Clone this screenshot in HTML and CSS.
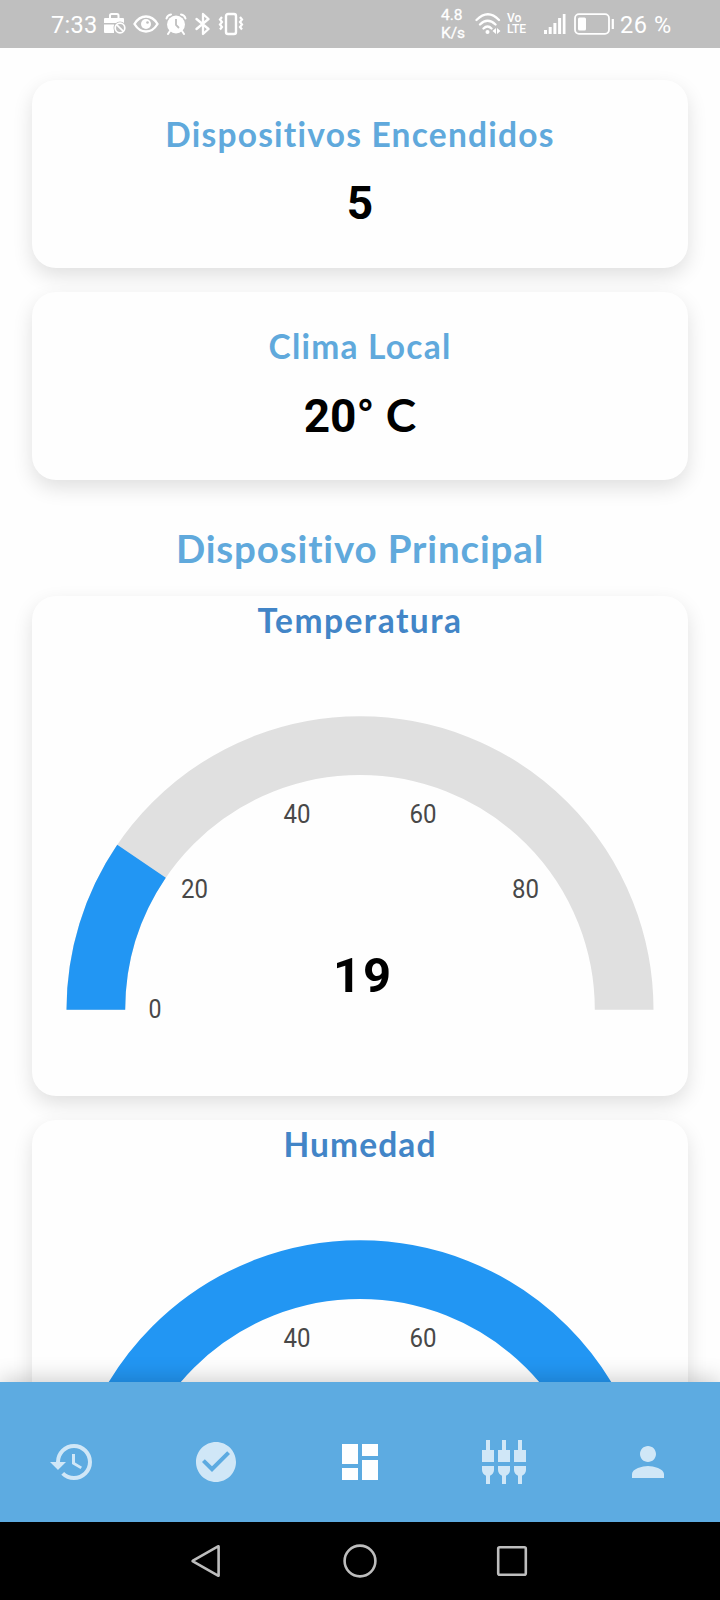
FILE: index.html
```html
<!DOCTYPE html>
<html lang="es">
<head>
<meta charset="utf-8">
<title>Dispositivos</title>
<link rel="stylesheet" href="styles.css">
</head>
<body>
<div class="screen">
  <header class="status">
    <div class="status-left">
      <span class="clock">7:33</span>
      <svg class="ic-bag" width="24" height="24" viewBox="0 0 24 24"><path d="M7 7V3.500Q7 2 8.500 2h5.500q1.500 0 1.500 1.500V7" fill="none" stroke="#fff" stroke-width="2"/><path d="M2 6h18q1 0 1 1v4H1V7q0-1 1-1zM1 12.500h10V21H2q-1 0-1-1z" fill="#fff"/><circle cx="17" cy="16" r="6.500" fill="#bfbfbf"/><circle cx="17" cy="16" r="4.800" fill="none" stroke="#fff" stroke-width="1.700"/><path d="M13.800 12.800l6.400 6.400" stroke="#fff" stroke-width="1.700"/></svg>
      <svg class="ic-eye" width="26" height="18" viewBox="0 0 26 18"><path d="M1.500 9Q6 1.500 13 1.500T24.500 9Q20 16.500 13 16.500T1.500 9z" fill="none" stroke="#fff" stroke-width="2.400"/><circle cx="13" cy="9" r="5" fill="#fff"/><circle cx="14.500" cy="7.500" r="1.300" fill="#bfbfbf"/></svg>
      <svg class="ic-alarm" width="22" height="22" viewBox="0 0 22 22"><circle cx="11" cy="11.500" r="9" fill="#fff"/><path d="M1.500 5.500Q2.500 2 6 1.500M20.500 5.500Q19.500 2 16 1.500M5 18l-2 3M17 18l2 3" fill="none" stroke="#fff" stroke-width="2" stroke-linecap="round"/><path d="M11 6v6l3 3" fill="none" stroke="#bfbfbf" stroke-width="1.800"/></svg>
      <svg class="ic-bt" width="16" height="24" viewBox="0 0 16 24"><path d="M1.500 7l12 10-5.500 5V2l5.500 5-12 10" fill="none" stroke="#fff" stroke-width="2.300" stroke-linejoin="round" stroke-linecap="round"/></svg>
      <svg class="ic-vib" width="26" height="24" viewBox="0 0 26 24"><rect x="8" y="2" width="10" height="20" rx="2" fill="none" stroke="#fff" stroke-width="2.400"/><path d="M4 5l-2 2.500L4 10l-2 2.500L4 15l-2 2.500M22 5l2 2.500L22 10l2 2.500L22 15l2 2.500" fill="none" stroke="#fff" stroke-width="2.200"/></svg>
    </div>
    <div class="status-right">
      <div class="speed"><span>4.8</span><span>K/s</span></div>
      <svg class="ic-wifi" width="26" height="22" viewBox="0 0 26 22"><path d="M1.500 7Q13-4.500 24 7M5 11.500Q12.500 4 20.500 11.500M8.500 15.500q4-4 8 0" fill="none" stroke="#fff" stroke-width="2.300" stroke-linecap="round"/><circle cx="12.500" cy="19" r="2" fill="#fff"/><path d="M21 15v6l-3.500-3zM22 15v6l3.500-3z" fill="#fff"/></svg>
      <div class="volte"><span>Vo</span><span>LTE</span></div>
      <svg class="ic-signal" width="22" height="22" viewBox="0 0 22 22"><path d="M0 17h3v4H0zM4.700 14h3v7h-3zM9.400 10h3v11h-3zM14.100 5h3v16h-3zM18.800 1h2.700v20h-2.700z" fill="#fff"/></svg>
      <svg class="ic-batt" width="41" height="22" viewBox="0 0 41 22"><rect x="1" y="1.200" width="34" height="19.600" rx="4" fill="none" stroke="#fff" stroke-width="1.800"/><rect x="4" y="4.500" width="8" height="13" rx="1.500" fill="#fff"/><path d="M38.800 6v10" stroke="#fff" stroke-width="2.200"/></svg>
      <span class="percent">26 %</span>
    </div>
  </header>

  <main class="content">
    <section class="card stat">
      <h2 class="stat-title">Dispositivos Encendidos</h2>
      <p class="stat-value">5</p>
    </section>
    <section class="card stat">
      <h2 class="stat-title">Clima Local</h2>
      <p class="stat-value">20° <span class="unit">C</span></p>
    </section>
    <h1 class="section-title">Dispositivo Principal</h1>
    <section class="card gauge-card">
      <h2 class="gauge-title">Temperatura</h2>
      <svg class="gauge" width="656" height="400" viewBox="0 0 656 400">
        <path class="track" d="M63.850 313.800A264.150 264.150 0 0 1 592.150 313.800"/>
        <path class="fill" pathLength="100" stroke-dasharray="19 100" d="M63.850 313.800A264.150 264.150 0 0 1 592.150 313.800"/>
        <g class="ticks"><text x="123" y="322" textLength="13" lengthAdjust="spacingAndGlyphs">0</text><text x="162.500" y="202" textLength="27" lengthAdjust="spacingAndGlyphs">20</text><text x="265" y="127" textLength="27" lengthAdjust="spacingAndGlyphs">40</text><text x="391" y="127" textLength="27" lengthAdjust="spacingAndGlyphs">60</text><text x="493.500" y="202" textLength="27" lengthAdjust="spacingAndGlyphs">80</text></g>
        <text class="reading" x="331" y="296">19</text>
      </svg>
    </section>
    <section class="card gauge-card">
      <h2 class="gauge-title humidity">Humedad</h2>
      <svg class="gauge" width="656" height="400" viewBox="0 0 656 400">
        <path class="fill" d="M63.850 313.800A264.150 264.150 0 0 1 592.150 313.800"/>
        <g class="ticks"><text x="265" y="127" textLength="27" lengthAdjust="spacingAndGlyphs">40</text><text x="391" y="127" textLength="27" lengthAdjust="spacingAndGlyphs">60</text></g>
      </svg>
    </section>
  </main>

  <nav class="tabs">
    <svg class="tab" viewBox="0 0 24 24"><path d="M13 3a9 9 0 0 0-9 9H1l3.890 3.890.07.14L9 12H6c0-3.870 3.130-7 7-7s7 3.130 7 7-3.130 7-7 7c-1.930 0-3.680-.79-4.940-2.060l-1.420 1.420A8.950 8.950 0 0 0 13 21a9 9 0 0 0 0-18zm-1 5v5l4.280 2.540.72-1.210-3.500-2.080V8H12z"/></svg>
    <svg class="tab" viewBox="0 0 24 24"><path d="M12 2C6.480 2 2 6.480 2 12s4.480 10 10 10 10-4.480 10-10S17.520 2 12 2zm-2 15l-5-5 1.410-1.410L10 14.170l7.590-7.590L19 8l-9 9z"/></svg>
    <svg class="tab active" viewBox="0 0 24 24"><path d="M3 13h8V3H3v10zm0 8h8v-6H3v6zm10 0h8V11h-8v10zm0-18v6h8V3h-8z"/></svg>
    <svg class="tab" viewBox="0 0 24 24"><path d="M3 1h2v5h2v6H1V6h2zM11 1h2v5h2v6H9V6h2zM19 1h2v5h2v6h-6V6h2zM1 14h6v2c0 1.300-.84 2.400-2 2.820V23H3v-4.180C1.840 18.400 1 17.300 1 16zM9 14h6v2c0 1.300-.84 2.400-2 2.820V23h-2v-4.180C9.840 18.400 9 17.300 9 16zM17 14h6v2c0 1.300-.84 2.400-2 2.820V23h-2v-4.180c-1.160-.42-2-1.520-2-2.820z"/></svg>
    <svg class="tab" viewBox="0 0 24 24"><path d="M12 12c2.210 0 4-1.790 4-4s-1.790-4-4-4-4 1.790-4 4 1.790 4 4 4zm0 2c-2.670 0-8 1.340-8 4v2h16v-2c0-2.660-5.330-4-8-4z"/></svg>
  </nav>
  <footer class="system">
    <svg width="36" height="36" viewBox="0 0 36 36"><path d="M28.600 3.500v29q0 .5-.6.200L3 18.500q-.8-.5 0-1L28 3.300q.6-.3.600.2z"/></svg>
    <svg width="36" height="36" viewBox="0 0 36 36"><circle cx="18" cy="18" r="15.400"/></svg>
    <svg width="36" height="36" viewBox="0 0 36 36"><rect x="4.200" y="4.200" width="27.600" height="27.600" rx="1.500"/></svg>
  </footer>
</div>
</body>
</html>
```
FILE: styles.css
```css
* { box-sizing: border-box; }
body { margin: 0; background: #fefefe; font-family: Lato, sans-serif; }
h1, h2, p { margin: 0; font-weight: 700; text-align: center; white-space: nowrap; }
.screen { width: 720px; height: 1600px; display: flex; flex-direction: column; overflow: hidden; }

.status { flex: none; height: 48px; background: #bfbfbf; color: #fff; display: flex; justify-content: space-between; padding: 0 46px 0 51px; font-family: Roboto, sans-serif; }
.status-left, .status-right { display: flex; align-items: center; }
.status svg { flex: none; }
.clock, .percent { font-size: 23.500px; line-height: 48px; white-space: nowrap; padding-top: 1px; }
.clock { width: 52px; letter-spacing: .3px; }
.ic-eye { margin-left: 6px; }
.ic-alarm { margin-left: 6px; }
.ic-bt { margin-left: 8px; }
.ic-vib { margin-left: 7px; }
.speed, .volte { display: flex; flex-direction: column; }
.speed { width: 34px; font-size: 15.500px; line-height: 18px; -webkit-text-stroke: .3px #fff; }
.ic-wifi { margin-right: 6px; }
.volte { width: 37px; font-size: 12px; line-height: 11px; font-weight: 500; }
.ic-batt { margin-left: 8px; }
.percent { margin-left: 5px; width: 54px; letter-spacing: .6px; }

.content { flex: 1; min-height: 0; overflow: hidden; padding: 32px 32px 0; background: #fefefe; }
.card { background: #fefefe; border-radius: 24px; box-shadow: 0 8px 20px rgba(0, 0, 0, .12); }
.stat { height: 188px; margin-bottom: 24px; padding-top: 33px; }
.stat-title { font-size: 33.500px; line-height: 42px; color: #60a9dc; letter-spacing: 1.230px; }
.stat-value { font-family: Roboto, sans-serif; font-size: 46px; line-height: 54px; margin-top: 21px; color: #000; }
.unit { font-family: Lato, sans-serif; }
.section-title { height: 92px; padding-top: 21px; font-size: 38.500px; line-height: 46px; color: #60a9dc; letter-spacing: .850px; }
.gauge-card { height: 500px; margin-bottom: 24px; padding-top: 3px; }
.gauge-title { font-size: 33.500px; line-height: 42px; color: #4285c7; letter-spacing: 1.500px; }
.gauge-title.humidity { letter-spacing: 1.100px; }
.gauge { display: block; margin-top: 55px; }
.track, .fill { fill: none; stroke-width: 58.700; stroke: #e0e0e0; }
.fill { stroke: #2296f3; }
.ticks text { font: 400 26px Roboto, sans-serif; fill: #484848; text-anchor: middle; }
.reading { font: 700 49px Roboto, sans-serif; letter-spacing: 2px; text-anchor: middle; }

.tabs { flex: none; position: relative; height: 140px; padding-top: 20px; display: grid; grid-template-columns: repeat(5, 1fr); place-items: center; background: #5dabe1; box-shadow: 0 -4px 20px rgba(0, 0, 0, .18); }
.tab { width: 48px; height: 48px; fill: #d0e7f7; }
.tab.active { fill: #fff; }
.system { flex: none; position: relative; height: 78px; padding: 0 190px; background: #000; display: flex; align-items: center; justify-content: space-between; }
.system svg { fill: none; stroke: #bdbdbd; stroke-width: 2.600; }
```
